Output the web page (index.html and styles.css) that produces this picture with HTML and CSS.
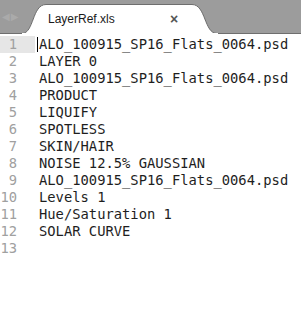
FILE: index.html
```html
<!DOCTYPE html>
<html lang="en">
  <head>
    <meta charset="UTF-8" />
    <title>LayerRef.xls</title>
    <link rel="stylesheet" href="styles.css">
  </head>
  <body>
    <div class="tabbar">
      <div class="nav">
        <span class="arrow">&#9664;</span>
        <span class="arrow">&#9654;</span>
      </div>
      <div class="tab">
        <svg class="tab-bg" width="196" height="34" viewBox="0 0 196 34">
          <path d="M0 33.5 C12 33.5 10 4.5 24 4.5 L170 4.5 C184 4.5 182 33.5 195 33.5 Z" fill="#fff" stroke="#6e6e6e" stroke-width="1"/>
          <rect x="0" y="33" width="196" height="2" fill="#fff"/>
        </svg>
        <span class="tab-name">LayerRef.xls</span>
        <span class="tab-close">&#215;</span>
      </div>
    </div>
    <div class="editor">
      <ol class="gutter">
        <li class="current">1</li>
        <li>2</li>
        <li>3</li>
        <li>4</li>
        <li>5</li>
        <li>6</li>
        <li>7</li>
        <li>8</li>
        <li>9</li>
        <li>10</li>
        <li>11</li>
        <li>12</li>
        <li>13</li>
      </ol>
      <div class="code">
        <div class="line"><span class="caret"></span>ALO_100915_SP16_Flats_0064.psd</div>
        <div class="line">LAYER 0</div>
        <div class="line">ALO_100915_SP16_Flats_0064.psd</div>
        <div class="line">PRODUCT</div>
        <div class="line">LIQUIFY</div>
        <div class="line">SPOTLESS</div>
        <div class="line">SKIN/HAIR</div>
        <div class="line">NOISE 12.5% GAUSSIAN</div>
        <div class="line">ALO_100915_SP16_Flats_0064.psd</div>
        <div class="line">Levels 1</div>
        <div class="line">Hue/Saturation 1</div>
        <div class="line">SOLAR CURVE</div>
        <div class="line"></div>
      </div>
    </div>
  </body>
</html>
```

FILE: styles.css
```css
* {
  margin: 0;
  padding: 0;
  list-style: none;
  box-sizing: border-box;
}
html,
body {
  width: 100%;
  height: 100%;
  overflow: hidden;
  background-color: #fff;
}
body {
  font-family: 'DejaVu Sans Mono', monospace;
}
.tabbar {
  height: 34px;
  display: flex;
  align-items: flex-end;
  background-color: #9c9c9c;
  border-bottom: 1px solid #6e6e6e;
}
.nav {
  width: 22px;
  height: 33px;
  display: flex;
  align-items: center;
  padding-left: 2px;
  gap: 1px;
}
.arrow {
  font-family: 'DejaVu Sans', sans-serif;
  font-size: 10px;
  color: #aaa;
}
.tab {
  position: relative;
  width: 196px;
  height: 34px;
  margin-bottom: -1px;
  display: flex;
  align-items: center;
  padding: 4px 0 0 26px;
  font-family: 'Liberation Sans', Arial, sans-serif;
}
.tab-bg {
  position: absolute;
  left: 0;
  top: 0;
}
.tab-name {
  position: relative;
  font-size: 12px;
  color: #1a1a1a;
  width: 122px;
}
.tab-close {
  position: relative;
  font-size: 14px;
  font-weight: bold;
  color: #555;
}
.editor {
  display: flex;
  padding-top: 2px;
}
.gutter {
  width: 35px;
  font-size: 13.8px;
  line-height: 17px;
  color: #a0a0a0;
}
.gutter li {
  height: 17px;
  padding-right: 18px;
  text-align: right;
}
.gutter .current {
  background-color: #e6e6e6;
}
.code {
  padding-left: 4px;
  font-size: 13.8px;
  line-height: 17px;
  color: #1e1e1e;
}
.line {
  height: 17px;
  position: relative;
  white-space: pre;
}
.caret {
  position: absolute;
  left: -2px;
  top: 1px;
  width: 1px;
  height: 15px;
  background-color: #000;
}
```
